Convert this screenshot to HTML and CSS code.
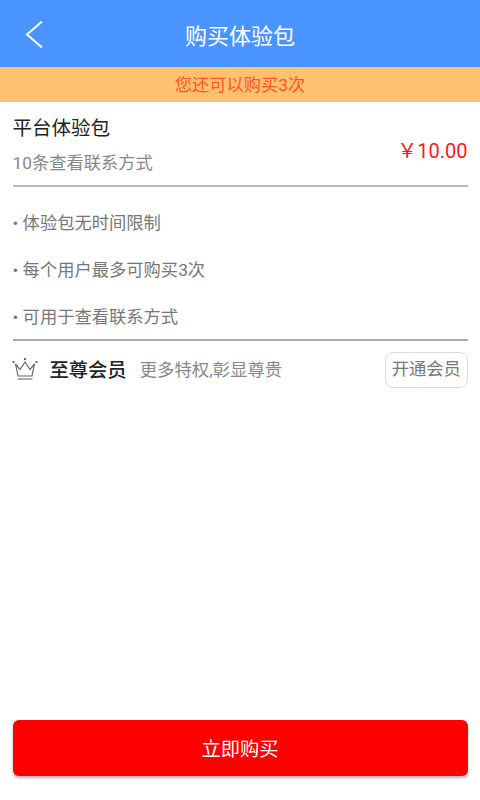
FILE: index.html
```html
<!DOCTYPE html>
<html lang="zh-CN">
<head>
    <meta charset="UTF-8">
    <meta name="viewport" content="width=device-width, initial-scale=1.0">
    <title>购买体验包</title>
    <link rel="stylesheet" href="styles.css">
</head>
<body>
    <div class="page">
        <div class="header">
            <svg class="back-icon" width="20" height="30" viewBox="0 0 20 30">
                <path d="M18 2.5 L3 15.5 L18 28.5" fill="none" stroke="#fff" stroke-width="2"/>
            </svg>
            <div class="header-title">购买体验包</div>
        </div>
        <div class="notice">您还可以购买3次</div>

        <div class="content">
            <div class="package">
                <div class="package-info">
                    <div class="package-name">平台体验包</div>
                    <div class="package-desc">10条查看联系方式</div>
                </div>
                <div class="price">￥10.00</div>
            </div>

            <div class="rules">
                <div class="rule">• 体验包无时间限制</div>
                <div class="rule">• 每个用户最多可购买3次</div>
                <div class="rule">• 可用于查看联系方式</div>
            </div>

            <div class="vip">
                <svg class="crown" width="26" height="24" viewBox="0 0 26 24">
                    <path d="M3.5 6 L6 18 H20 L22.5 6 L18 11.5 L13 4 L8 11.5 Z" fill="none" stroke="#666" stroke-width="1.2"/>
                    <path d="M5.5 21 H20.5" stroke="#888" stroke-width="1.4"/>
                    <circle cx="1.5" cy="4" r="1.1" fill="#555"/>
                    <circle cx="13" cy="1.2" r="1.1" fill="#555"/>
                    <circle cx="24.5" cy="4" r="1.1" fill="#555"/>
                </svg>
                <span class="vip-name">至尊会员</span>
                <span class="vip-desc">更多特权,彰显尊贵</span>
                <div class="vip-btn">开通会员</div>
            </div>
        </div>

        <div class="buy-btn">立即购买</div>
    </div>
</body>
</html>
```

FILE: styles.css
```css
* {
    margin: 0;
    padding: 0;
    box-sizing: border-box;
}

body {
    font-family: Roboto, "Noto Sans CJK SC", sans-serif;
    background: #fff;
    overflow: hidden;
}

.page {
    display: flex;
    flex-direction: column;
    height: 800px;
}

.header {
    display: flex;
    align-items: center;
    height: 67px;
    padding-left: 24px;
    background: #4a94ff;
}

.back-icon {
    display: block;
}

.header-title {
    flex: 1;
    margin-right: 44px;
    text-align: center;
    font-size: 22px;
    color: #fff;
}

.notice {
    height: 35px;
    padding-top: 2px;
    line-height: 33px;
    text-align: center;
    font-size: 17.3px;
    color: #ff5722;
    background: #ffc06f;
}

.content {
    flex: 1;
    padding: 0 12.5px;
}

.package {
    display: flex;
    align-items: center;
    justify-content: space-between;
    height: 85px;
    padding-top: 3px;
    border-bottom: 2px solid #bbb;
}

.package-name {
    font-size: 19.5px;
    line-height: 28px;
    color: #222;
    margin-bottom: 8px;
}

.package-desc {
    font-size: 17.3px;
    line-height: 24px;
    color: #888;
}

.price {
    margin-top: 8px;
    font-size: 20px;
    color: #ff1a1a;
}

.rules {
    display: flex;
    flex-direction: column;
    gap: 17px;
    padding: 21px 0 7px;
    border-bottom: 2px solid #aaa;
}

.rule {
    line-height: 30px;
    font-size: 17.3px;
    color: #777;
}

.vip {
    display: flex;
    align-items: center;
    height: 58px;
}

.crown {
    display: block;
    margin: 0 12px 0 -1px;
}

.vip-name {
    margin: 0 13px 3px 0;
    font-size: 19.3px;
    font-weight: 500;
    color: #222;
}

.vip-desc {
    flex: 1;
    margin-bottom: 3px;
    font-size: 17.4px;
    color: #888;
}

.vip-btn {
    width: 82.5px;
    height: 36px;
    line-height: 33px;
    text-align: center;
    font-size: 17.3px;
    color: #777;
    border: 1px solid #ddd;
    border-radius: 8px;
}

.buy-btn {
    height: 56px;
    margin: 0 12.5px 24px;
    padding-top: 4px;
    line-height: 52px;
    text-align: center;
    font-size: 19.3px;
    color: #fff;
    background: #ff0000;
    border-radius: 6px;
    box-shadow: 0 2px 3px rgba(0, 0, 0, 0.3);
}
```
